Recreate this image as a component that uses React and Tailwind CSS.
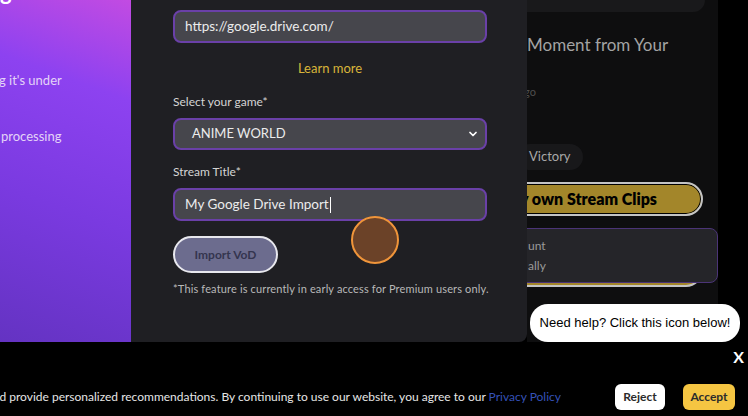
import { ChevronDown } from 'lucide-react';

export default function App() {
  return (
    <div className="w-[748px] h-[416px] bg-black flex flex-col overflow-hidden font-['Lato',sans-serif]">
      <div className="h-[342px] flex shrink-0">
        {/* left purple panel */}
        <div className="w-[131px] h-full bg-[linear-gradient(200deg,#c24be2_0%,#8d42f0_26%,#7a3ae0_60%,#6433c2_100%)] overflow-hidden flex flex-col text-[#e4d3f7]">
          <div className="-mt-[19px] h-[24px] text-[22px] font-bold text-white leading-[22px]">g</div>
          <div className="mt-[67px] text-[13px] leading-[16px] -ml-[1px] whitespace-nowrap">g it's under</div>
          <div className="mt-[40px] text-[13px] leading-[16px] ml-[1px] whitespace-nowrap">processing</div>
        </div>

        {/* modal form */}
        <div className="relative w-[396px] h-full bg-[#1f1f23] rounded-br-lg pl-[42px] flex flex-col">
          <div className="mt-[10px] w-[314px] h-[33px] rounded-lg bg-[#46464c] border-2 border-[#6a40a8] flex items-center pl-[10px] text-[13.5px] text-[#ececec]">
            https://google.drive.com/
          </div>
          <div className="mt-[16px] w-[314px] h-[18px] leading-[18px] text-center text-[13px] text-[#d9b53a]">Learn more</div>
          <div className="mt-[17px] h-[16px] leading-[16px] text-[12px] text-[#d4d4d4]">Select your game*</div>
          <div className="mt-[8px] w-[314px] h-[32px] rounded-lg bg-[#46464c] border-2 border-[#6a40a8] flex items-center pl-[17px] pr-[6px] text-[13px] text-[#ececec]">
            <span className="flex-1">ANIME WORLD</span>
            <ChevronDown size={12} strokeWidth={3.5} color="#ffffff" />
          </div>
          <div className="mt-[14px] h-[16px] leading-[16px] text-[12px] text-[#d4d4d4]">Stream Title*</div>
          <div className="mt-[8px] w-[314px] h-[33px] rounded-lg bg-[#46464c] border-2 border-[#6a40a8] flex items-center pl-[10px] text-[13.5px] text-[#ececec]">
            My Google Drive Import<span className="w-px h-[16px] bg-white ml-px" />
          </div>
          <div className="mt-[15px] w-[105px] h-[37px] rounded-full bg-[#6c6c8e] border-2 border-[#e8e8ee] flex items-center justify-center text-[12px] font-bold text-[#34354f]">
            Import VoD
          </div>
          <div className="mt-[9px] h-[14px] leading-[14px] text-[11px] tracking-[0.15px] text-[#b8b8b8] whitespace-nowrap">
            *This feature is currently in early access for Premium users only.
          </div>

          {/* click indicator */}
          <div className="absolute left-[220px] top-[216px] w-[48px] h-[48px] rounded-full bg-[#6b4228] border-2 border-[#f0953a]" />
        </div>

        {/* page behind modal */}
        <div className="relative flex-1 h-full overflow-hidden">
          <div className="w-[191px] h-full bg-[#0e0e0f] flex flex-col">
            <div className="h-[12px] w-[178px] bg-[#19191b] rounded-br-2xl" />
            <div className="mt-[22px] h-[22px] leading-[22px] text-[17px] text-[#a3a3a3] whitespace-nowrap">Moment from Your</div>
            <div className="mt-[29px] h-[14px] leading-[14px] text-[11px] text-[#4e4e4e] -ml-[3px]">go</div>
            <div className="mt-[45px] self-start -ml-[10px] h-[26px] pl-[12px] pr-[12px] rounded-full bg-[#18181a] flex items-center text-[13px] text-[#a8a8a8]">
              Victory
            </div>
            <div className="mt-[12px] -ml-[30px] w-[206px] h-[34px] rounded-full bg-[#a3862a] border-2 border-[#c4c4c4] ring-1 ring-inset ring-black flex items-center justify-end pr-[44px] text-[16px] font-extrabold text-black whitespace-nowrap">
              my own Stream Clips
            </div>
            <div className="relative mt-[12px] h-[59px]">
              <div className="absolute bottom-0 -left-[30px] w-[206px] h-[34px] rounded-full bg-[#a3862a] border-2 border-[#c4c4c4]" />
              <div className="absolute top-0 -left-[10px] w-[201px] h-[55px] rounded-lg bg-[#252529] border border-[#4b3477] flex flex-col justify-center gap-[6px] pl-[10px] text-[12px] text-[#9a9a9a]">
                <div className="leading-[14px]">unt</div>
                <div className="leading-[14px]">ally</div>
              </div>
            </div>
          </div>

          {/* help tooltip */}
          <div className="absolute left-[3px] top-[304px] w-[210px] h-[38px] rounded-[18px] bg-white flex items-center justify-center text-[13px] text-black font-['Liberation_Sans',sans-serif]">
            Need help? Click this icon below!
          </div>
        </div>
      </div>

      {/* cookie bar */}
      <div className="h-[74px] flex flex-col">
        <div className="h-[30px] flex justify-end items-center pr-[4px]">
          <span className="text-[16px] font-bold text-white leading-none">X</span>
        </div>
        <div className="flex items-center h-[26px] mt-[12px]">
          <div className="w-[561px] overflow-hidden flex justify-end">
            <span className="whitespace-nowrap text-[12px] text-[#e6e6e6]">
              We use cookies to improve your experience and provide personalized recommendations. By continuing to use our website, you agree to our{' '}
              <span className="text-[#3552b8]">Privacy Policy</span>
            </span>
          </div>
          <div className="ml-[54px] w-[50px] h-[26px] rounded-md bg-white flex items-center justify-center text-[12px] font-bold text-[#2b2b2b]">Reject</div>
          <div className="ml-[18px] w-[52px] h-[26px] rounded-md bg-[#f5c542] flex items-center justify-center text-[12px] font-bold text-[#2b2b2b]">Accept</div>
        </div>
      </div>
    </div>
  );
}
